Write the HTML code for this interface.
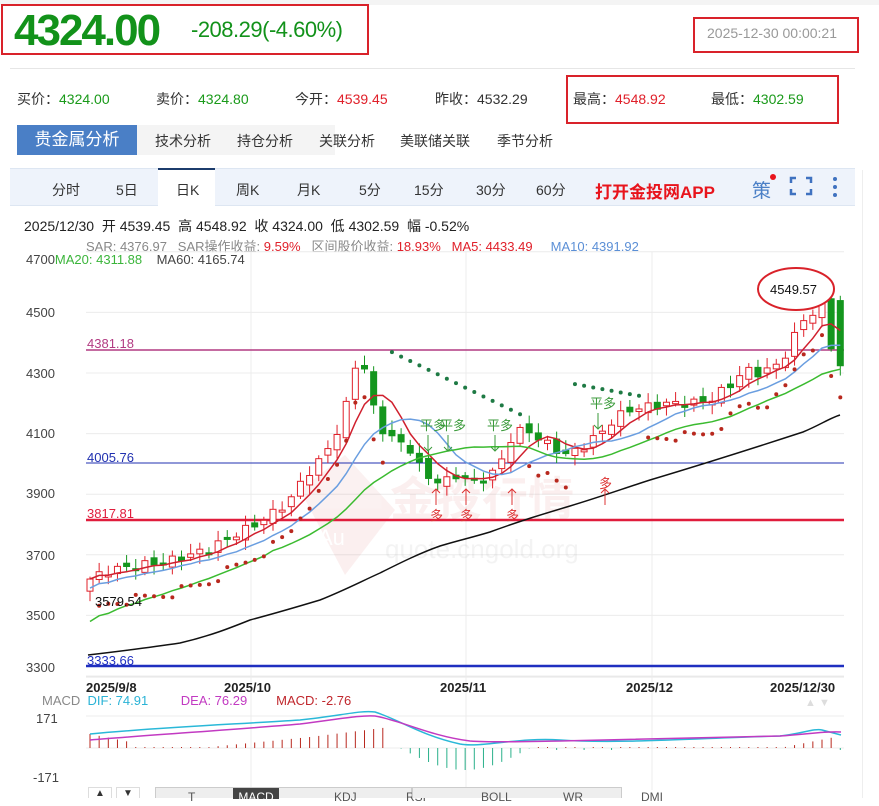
<!DOCTYPE html>
<html><head><meta charset="utf-8">
<style>
*{margin:0;padding:0;box-sizing:border-box}
body{width:879px;height:798px;overflow:hidden;background:#fff;font-family:"Liberation Sans","Noto Sans CJK SC",sans-serif;position:relative;color:#333}
.a{position:absolute;white-space:nowrap}
.g{color:#1a9a1a}.r{color:#e0202a}
</style></head><body>
<div class="a" style="left:0;top:0;width:879px;height:5px;background:#f4f4f4"></div>
<div class="a" style="left:1px;top:4px;width:368px;height:51px;border:2px solid #d9222a"></div>
<div class="a" style="left:14px;top:6px;font-size:44px;font-weight:bold;color:#12921a;letter-spacing:-2px">4324.00</div>
<div class="a" style="left:191px;top:17px;font-size:22px;color:#12921a;letter-spacing:-0.5px">-208.29(-4.60%)</div>
<div class="a" style="left:693px;top:17px;width:166px;height:36px;border:2px solid #d9222a"></div>
<div class="a" style="left:707px;top:25px;font-size:14px;color:#999">2025-12-30 00:00:21</div>
<div class="a" style="left:10px;top:68px;width:845px;height:1px;background:#e6e6e6"></div>
<div class="a" style="left:17px;top:89px;font-size:14px">买价：<span class="g">4324.00</span></div>
<div class="a" style="left:156px;top:89px;font-size:14px">卖价：<span class="g">4324.80</span></div>
<div class="a" style="left:295px;top:89px;font-size:14px">今开：<span class="r">4539.45</span></div>
<div class="a" style="left:435px;top:89px;font-size:14px">昨收：4532.29</div>
<div class="a" style="left:566px;top:75px;width:273px;height:49px;border:2px solid #d9222a"></div>
<div class="a" style="left:573px;top:89px;font-size:14px">最高：<span class="r">4548.92</span></div>
<div class="a" style="left:711px;top:89px;font-size:14px">最低：<span class="g">4302.59</span></div>
<div class="a" style="left:80px;top:125px;width:255px;height:30px;background:#f4f4f4"></div>
<div class="a" style="left:17px;top:125px;width:120px;height:30px;background:#4a7fc6;color:#fff;font-size:17px;line-height:30px;text-align:center">贵金属分析</div>
<div class="a" style="left:155px;top:131px;font-size:14px">技术分析</div>
<div class="a" style="left:237px;top:131px;font-size:14px">持仓分析</div>
<div class="a" style="left:319px;top:131px;font-size:14px">关联分析</div>
<div class="a" style="left:400px;top:131px;font-size:14px">美联储关联</div>
<div class="a" style="left:497px;top:131px;font-size:14px">季节分析</div>
<div class="a" style="left:10px;top:168px;width:845px;height:38px;background:#eef3fb;border-top:1px solid #dde6f2;border-bottom:1px solid #dde6f2"></div>
<div class="a" style="left:158px;top:168px;width:57px;height:39px;background:#fff;border-top:2px solid #1c3c6c"></div>
<div class="a" style="left:0;top:180px;font-size:14px;width:600px">
<span class="a" style="left:52px">分时</span><span class="a" style="left:116px">5日</span><span class="a" style="left:176px">日K</span><span class="a" style="left:236px">周K</span><span class="a" style="left:297px">月K</span><span class="a" style="left:359px">5分</span><span class="a" style="left:414px">15分</span><span class="a" style="left:476px">30分</span><span class="a" style="left:536px">60分</span></div>
<div class="a" style="left:595px;top:178px;font-size:17px;font-weight:bold;color:#e8141c">打开金投网APP</div>
<div class="a" style="left:752px;top:176px;font-size:19px;color:#4a7fc6">策</div>
<div class="a" style="left:770px;top:174px;width:6px;height:6px;border-radius:3px;background:#e8141c"></div>
<svg class="a" style="left:789px;top:176px" width="24" height="20"><path d="M2 7V2H7M17 2H22V7M22 13V18H17M7 18H2V13" fill="none" stroke="#3f72c0" stroke-width="2.5"/></svg>
<svg class="a" style="left:831px;top:176px" width="8" height="22"><circle cx="4" cy="3" r="2" fill="#3f72c0"/><circle cx="4" cy="11" r="2" fill="#3f72c0"/><circle cx="4" cy="19" r="2" fill="#3f72c0"/></svg>
<div class="a" style="left:862px;top:170px;width:1px;height:628px;background:#eee"></div>
<div class="a" style="left:24px;top:216px;font-size:14px;color:#222">2025/12/30&nbsp; 开 4539.45&nbsp; 高 4548.92&nbsp; 收 4324.00&nbsp; 低 4302.59&nbsp; 幅 -0.52%</div>
<div class="a" style="left:86px;top:236px;font-size:13px;color:#888">SAR: 4376.97&nbsp;&nbsp; SAR操作收益: <span class="r">9.59%</span>&nbsp;&nbsp; 区间股价收益: <span class="r">18.93%</span>&nbsp;&nbsp; <span class="r">MA5: 4433.49</span>&nbsp;&nbsp;&nbsp;&nbsp; <span style="color:#5b8fd6">MA10: 4391.92</span></div>
<svg class="a" style="left:0;top:0" width="879" height="798" id="s"></svg>
<div class="a" style="left:26px;top:252px;font-size:13px;color:#444">4700<span style="color:#3bb53b">MA20: 4311.88</span>&nbsp;&nbsp;&nbsp; MA60: 4165.74</div>
<div class="a" style="left:86px;top:680px;font-size:13px;font-weight:bold;color:#222">2025/9/8</div>
<div class="a" style="left:224px;top:680px;font-size:13px;font-weight:bold;color:#222">2025/10</div>
<div class="a" style="left:440px;top:680px;font-size:13px;font-weight:bold;color:#222">2025/11</div>
<div class="a" style="left:626px;top:680px;font-size:13px;font-weight:bold;color:#222">2025/12</div>
<div class="a" style="left:770px;top:680px;font-size:13px;font-weight:bold;color:#222">2025/12/30</div>
<div class="a" style="left:42px;top:693px;font-size:13px;color:#888">MACD&nbsp; <span style="color:#2ab3d6">DIF: 74.91</span>&nbsp;&nbsp;&nbsp;&nbsp;&nbsp;&nbsp;&nbsp;&nbsp; <span style="color:#c23ac2">DEA: 76.29</span>&nbsp;&nbsp;&nbsp;&nbsp;&nbsp;&nbsp;&nbsp; <span style="color:#c0272d">MACD: -2.76</span></div>
<div class="a" style="left:805px;top:697px;font-size:11px;color:#ddd">▲ ▼</div>
<div class="a" style="left:36px;top:711px;font-size:13px;color:#444">171</div>
<div class="a" style="left:33px;top:770px;font-size:13px;color:#444">-171</div>
<div class="a" style="left:88px;top:787px;width:24px;height:11px;border:1px solid #ddd;border-bottom:none;font-size:10px;text-align:center">▲</div>
<div class="a" style="left:116px;top:787px;width:24px;height:11px;border:1px solid #ddd;border-bottom:none;font-size:10px;text-align:center">▼</div>
<div class="a" style="left:155px;top:787px;width:257px;height:11px;background:#eee;border:1px solid #ccc;border-bottom:none;font-size:12px;color:#555;line-height:18px">
<span class="a" style="left:32px">T</span><span class="a" style="left:77px;width:46px;height:11px;background:#444;color:#fff;text-align:center">MACD</span><span class="a" style="left:178px">KDJ</span><span class="a" style="left:250px">RSI</span></div>
<div class="a" style="left:412px;top:787px;width:210px;height:11px;background:#eee;border:1px solid #ccc;border-bottom:none;font-size:12px;color:#555;line-height:18px"><span class="a" style="left:68px">BOLL</span><span class="a" style="left:150px">WR</span><span class="a" style="left:228px">DMI</span></div>
<script>
var s=document.getElementById('s'),h='';
function Y(p){return 373-(p-4300)*0.303}
[4700,4500,4300,4100,3900,3700,3500,3300].forEach(function(p){var y=Y(p);h+='<line x1="86" x2="844" y1="'+y+'" y2="'+y+'" stroke="#ececec"/>';});
h+='<line x1="86" x2="844" y1="677" y2="677" stroke="#e6e6e6"/>';
[251,466,652].forEach(function(x){h+='<line x1="'+x+'" x2="'+x+'" y1="252" y2="790" stroke="#ececec"/>';});
[[4500,312],[4300,373],[4100,433],[3900,493],[3700,555],[3500,615],[3300,667]].forEach(function(a){h+='<text x="26" y="'+(a[1]+5)+'" font-size="13" fill="#444">'+a[0]+'</text>';});
h+='<g opacity="0.07"><polygon points="300,490 345,455 395,510 345,575" fill="#c33"/><text x="318" y="545" font-size="22" fill="#fff">Au</text><text x="390" y="515" font-size="46" font-weight="bold" fill="#c33">金投行情</text><text x="385" y="558" font-size="26" fill="#666">quote.cngold.org</text></g>';
h+='<line x1="86" x2="844" y1="350" y2="350" stroke="#b23a82" stroke-width="1.5"/><text x="87" y="348" font-size="13" fill="#b23a82">4381.18</text>';
h+='<line x1="86" x2="844" y1="463" y2="463" stroke="#2030b0"/><text x="87" y="462" font-size="13" fill="#2030b0">4005.76</text>';
h+='<line x1="86" x2="844" y1="520" y2="520" stroke="#e01c3c" stroke-width="2.5"/><text x="87" y="518" font-size="13" fill="#e01c3c">3817.81</text>';
h+='<line x1="86" x2="844" y1="666" y2="666" stroke="#1f2fc0" stroke-width="2.5"/><text x="87" y="665" font-size="13" fill="#1f2fc0">3333.66</text>';
var K=[[90,3620],[110,3650],[130,3660],[150,3670],[170,3680],[190,3700],[210,3720],[230,3760],[250,3790],[270,3830],[290,3880],[305,3960],[320,4010],[335,4090],[345,4170],[352,4300],[360,4360],[368,4280],[375,4160],[385,4100],[395,4080],[410,4050],[420,3990],[430,3950],[445,3940],[460,3970],[475,3940],[490,3960],[500,4000],[510,4080],[525,4120],[540,4080],[555,4050],[565,4030],[580,4050],[600,4100],[615,4150],[630,4180],[650,4190],[670,4200],[690,4200],[710,4210],[730,4260],[745,4310],[760,4300],[775,4320],[790,4380],[800,4470],[810,4490],[822,4520],[832,4380],[841,4324]];
function X(i){return 90+i*9.15}
var N=83,C=[];
function interp(x){for(var j=0;j<K.length-1;j++){if(x<=K[j+1][0]){var t=(x-K[j][0])/(K[j+1][0]-K[j][0]);return K[j][1]+(K[j+1][1]-K[j][1])*Math.max(0,t);}}return K[K.length-1][1];}
for(var i=0;i<N;i++)C.push(interp(X(i))+Math.sin(i*2.3)*14);
C[N-1]=4324;C[N-2]=4380;
var O=[3580];for(i=1;i<N;i++)O.push(C[i-1]+Math.cos(i*1.7)*12);O[N-1]=4539;O[N-2]=4545;
for(i=0;i<N;i++){var o=O[i],c=C[i],up=c>=o,x=X(i),hi=Math.max(o,c)+8+Math.abs(Math.sin(i))*25,lo=Math.min(o,c)-8-Math.abs(Math.cos(i*1.3))*25;
var col=up?'#e0202a':'#14961e';h+='<line x1="'+x+'" x2="'+x+'" y1="'+Y(hi)+'" y2="'+Y(lo)+'" stroke="'+col+'"/>';
var yt=Y(Math.max(o,c)),hh=Math.max(2,Y(Math.min(o,c))-yt);h+='<rect x="'+(x-3)+'" y="'+yt+'" width="6" height="'+hh+'" fill="'+(up?'#fff':col)+'" stroke="'+col+'"/>';}
function MA(n,col,w,off){var p='';for(var i=0;i<N;i++){var st=Math.max(0,i-n+1),sm=0,k=0;for(var q=st;q<=i;q++){sm+=C[q];k++;}var v=sm/k-(off||0)*Math.max(0,1-i/n);p+=(i?'L':'M')+X(i).toFixed(1)+' '+Y(v).toFixed(1);}h+='<path d="'+p+'" fill="none" stroke="'+col+'" stroke-width="'+w+'"/>';}
MA(5,'#d0202e',1.5);MA(10,'#6a9ee0',1.5,30);MA(20,'#3bbb30',1.5,140);
h+='<path d="M88 655C130 650 160 646 180 643C210 636 230 628 250 620C280 612 300 606 320 600C345 590 360 582 380 573C400 563 420 553 440 546C460 540 470 538 490 532C520 521 540 515 570 506C600 497 625 488 650 480C700 465 760 446 803 432C820 425 830 418 840 415" fill="none" stroke="#111" stroke-width="1.5"/>';
for(i=1;i<N;i++){var x=X(i),y,c2='#b8281e';if(x>=385&&x<=528){y=Y(4380-(x-385)*1.6);c2='#1e7a44';}else if(x>=572&&x<=640){y=Y(4265-(x-572)*0.6);c2='#1e7a44';}else y=Y(interp(x)-95-(i%5)*7);h+='<circle cx="'+x+'" cy="'+y+'" r="2" fill="'+c2+'"/>';}
h+='<text x="95" y="606" font-size="13" fill="#111">3579.54</text>';
h+='<ellipse cx="796" cy="289" rx="38" ry="21" fill="#fff" stroke="#d9222a" stroke-width="2"/><text x="770" y="294" font-size="13" fill="#111">4549.57</text>';
[[420,430,'平多'],[440,430,'平多'],[487,430,'平多'],[590,408,'平多']].forEach(function(a){h+='<text x="'+a[0]+'" y="'+a[1]+'" font-size="13" fill="#3a9a3a">'+a[2]+'</text><path d="M'+(a[0]+8)+' '+(a[1]+5)+'v16m-4 -4l4 4l4 -4" stroke="#3a9a3a" fill="none"/>';});
[436,466,512,605].forEach(function(x){h+='<path d="M'+x+' 505v-16m-4 4l4 -4l4 4" stroke="#d33" fill="none"/><text x="'+(x-6)+'" y="'+(x==605?488:520)+'" font-size="13" fill="#d33">多</text>';});
h+='<line x1="86" x2="844" y1="716" y2="716" stroke="#ececec"/><line x1="86" x2="844" y1="748" y2="748" stroke="#ececec"/>';
for(i=0;i<N;i++){var x=X(i),v;if(x<135)v=14-(x-90)/5;else if(x<310)v=(x<200?1:(x-200)/10);else if(x<385)v=11+(x-310)/8;else if(x<400)v=0;else if(x<530)v=-Math.sin((x-400)/130*Math.PI)*22;else if(x<620)v=(i%3==0?-2:1);else v=(x>780?(x-780)/5:1);if(x>835)v=-2;
h+='<line x1="'+x+'" x2="'+x+'" y1="748" y2="'+(748-v)+'" stroke="'+(v>=0?'#b8281e':'#2ab08a')+'"/>';}
h+='<path d="M90 734C150 728 220 725 300 720C340 716 360 710 375 712C400 720 420 735 460 744C480 748 520 737 560 740C620 744 700 738 780 736C800 734 815 728 822 730L841 735" fill="none" stroke="#2ab8d8" stroke-width="1.5"/>';
h+='<path d="M90 740C150 735 230 730 300 724C340 719 360 715 375 716C400 720 430 736 470 741C500 743 540 741 560 741C620 740 700 738 780 736C810 734 825 731 841 732" fill="none" stroke="#c23ac2" stroke-width="1.5"/>';
s.innerHTML=h;
</script>
</body></html>
